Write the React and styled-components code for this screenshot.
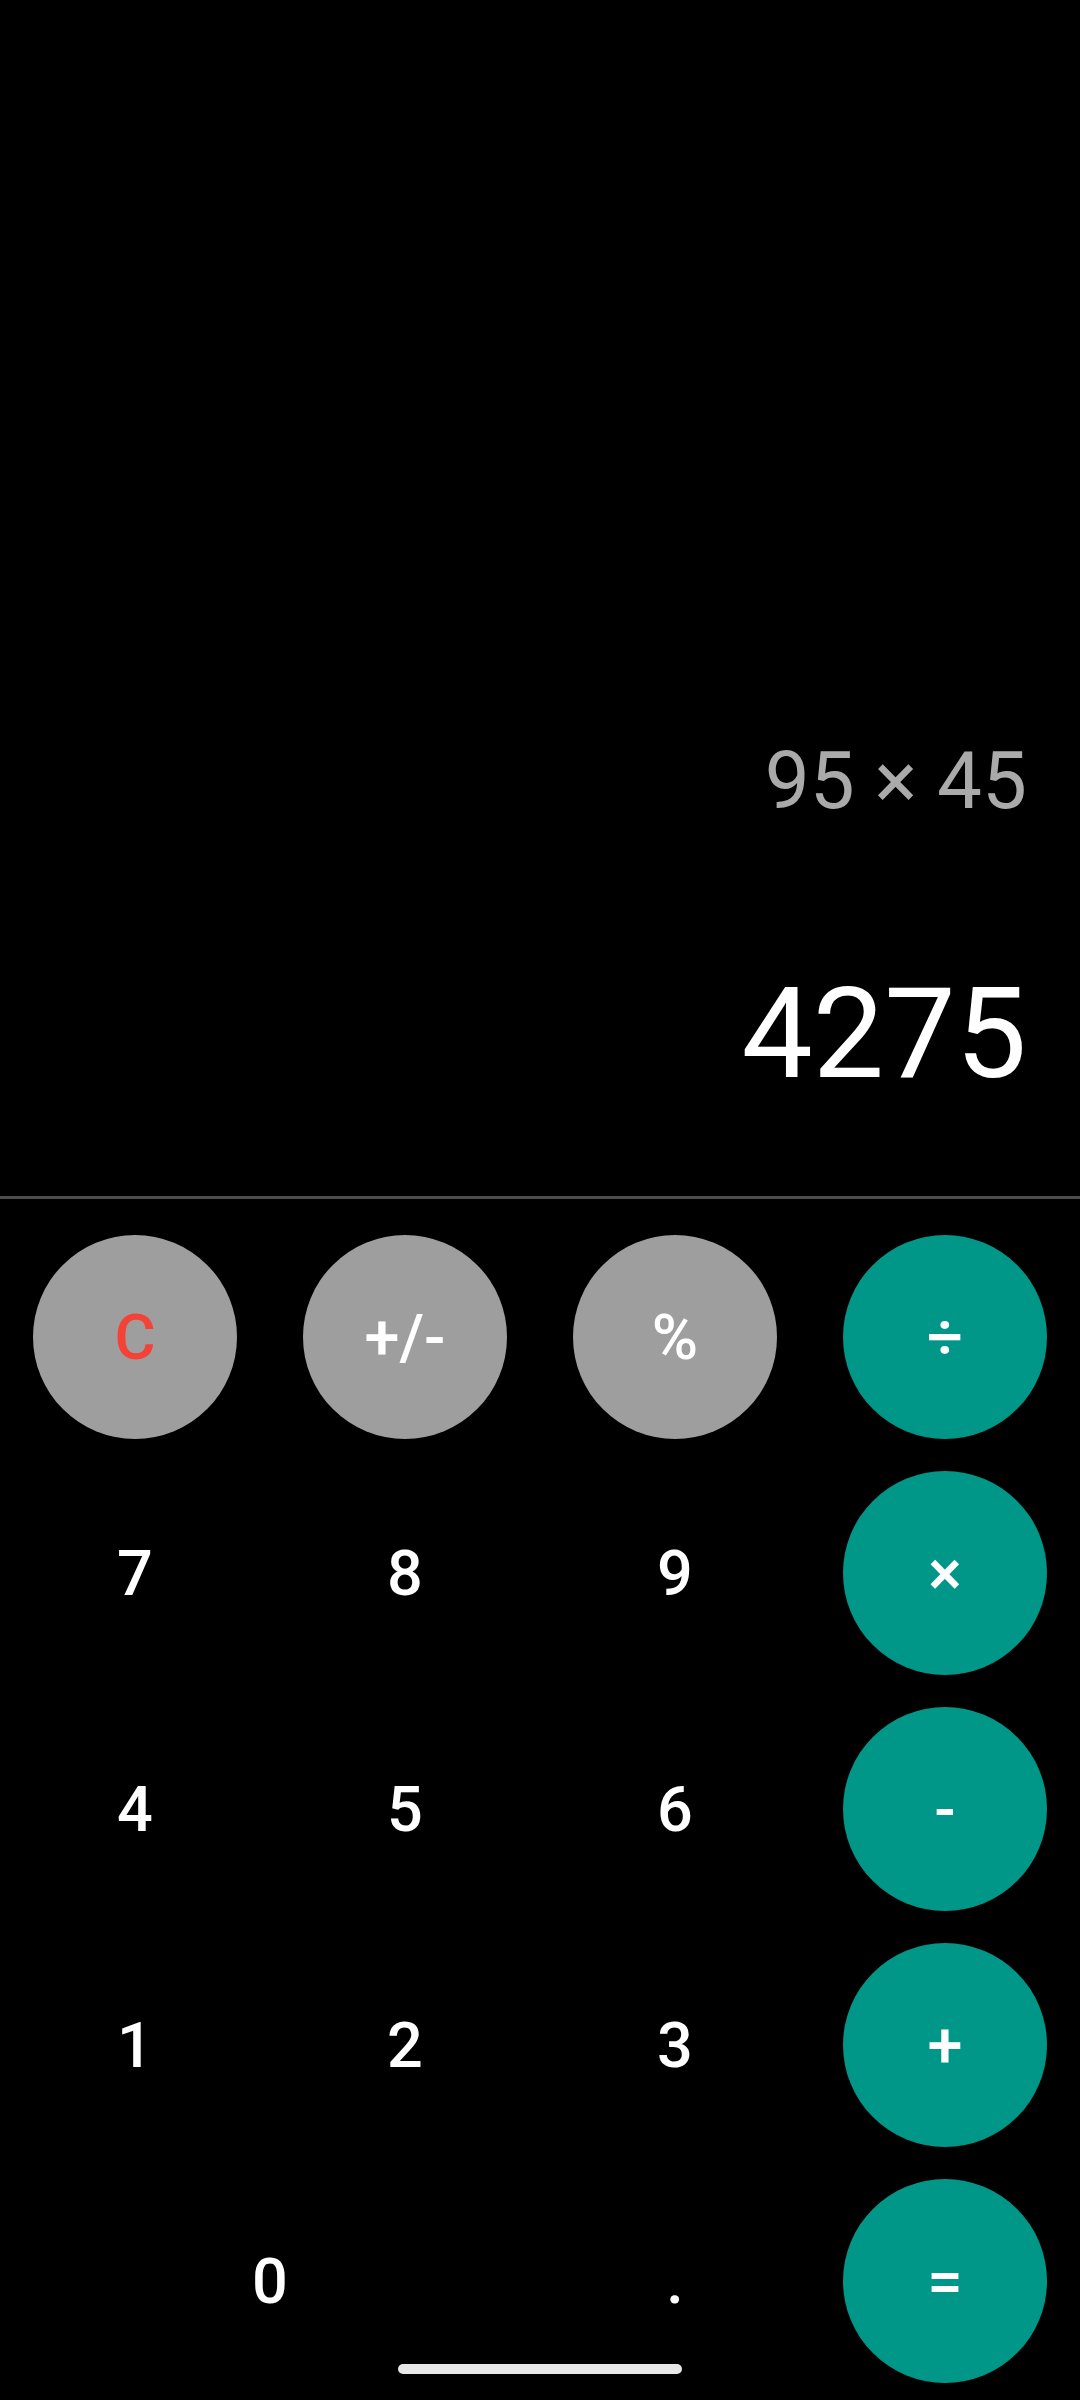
import React from 'react';
import styled, { createGlobalStyle } from 'styled-components';

const GlobalStyle = createGlobalStyle`
  html, body {
    margin: 0;
    padding: 0;
    background: #000;
  }
  * {
    box-sizing: border-box;
  }
`;

const Screen = styled.div`
  position: relative;
  width: 1080px;
  height: 2400px;
  background: #000;
  display: flex;
  flex-direction: column;
  font-family: Roboto, 'Noto Sans', sans-serif;
  overflow: hidden;
`;

const Display = styled.div`
  height: 1196px;
  display: flex;
  flex-direction: column;
  justify-content: flex-end;
  align-items: flex-end;
  padding: 0 53px 99px 0;
`;

const Expression = styled.div`
  font-size: 80px;
  line-height: 1;
  color: #aaaaaa;
  margin-bottom: 149px;
  white-space: nowrap;
`;

const Result = styled.div`
  font-size: 127px;
  line-height: 1;
  color: #ffffff;
  white-space: nowrap;
`;

const Divider = styled.div`
  height: 3px;
  background: #4d4d4d;
`;

const Keypad = styled.div`
  display: grid;
  grid-template-columns: repeat(4, 270px);
  grid-auto-rows: 236px;
  padding-top: 20px;
`;

const Cell = styled.div`
  display: flex;
  align-items: center;
  justify-content: center;
  grid-column: span ${(p) => p.$span || 1};
`;

const Key = styled.button`
  width: 204px;
  height: 204px;
  border: none;
  border-radius: 50%;
  padding: 0;
  display: flex;
  align-items: center;
  justify-content: center;
  font-family: Roboto, 'Noto Sans', sans-serif;
  font-size: 63px;
  font-weight: 500;
  line-height: 1;
  cursor: pointer;
  background: ${(p) =>
    p.$kind === 'func' ? '#9e9e9e' : p.$kind === 'op' ? '#009688' : 'transparent'};
  color: ${(p) => (p.$red ? '#f44336' : '#ffffff')};
`;

const HomeBar = styled.div`
  position: absolute;
  left: 398px;
  bottom: 26px;
  width: 284px;
  height: 10px;
  border-radius: 5px;
  background: #e8e8e8;
`;

const keys = [
  { label: 'C', kind: 'func', red: true },
  { label: '+/-', kind: 'func' },
  { label: '%', kind: 'func' },
  { label: '÷', kind: 'op' },
  { label: '7' },
  { label: '8' },
  { label: '9' },
  { label: '×', kind: 'op' },
  { label: '4' },
  { label: '5' },
  { label: '6' },
  { label: '-', kind: 'op' },
  { label: '1' },
  { label: '2' },
  { label: '3' },
  { label: '+', kind: 'op' },
  { label: '0', span: 2 },
  { label: '.' },
  { label: '=', kind: 'op' },
];

const App = () => {
  return (
    <>
      <GlobalStyle />
      <Screen>
        <Display>
          <Expression>95 × 45</Expression>
          <Result>4275</Result>
        </Display>
        <Divider />
        <Keypad>
          {keys.map((k) => (
            <Cell key={k.label} $span={k.span}>
              <Key $kind={k.kind} $red={k.red}>
                {k.label}
              </Key>
            </Cell>
          ))}
        </Keypad>
        <HomeBar />
      </Screen>
    </>
  );
};

export default App;
